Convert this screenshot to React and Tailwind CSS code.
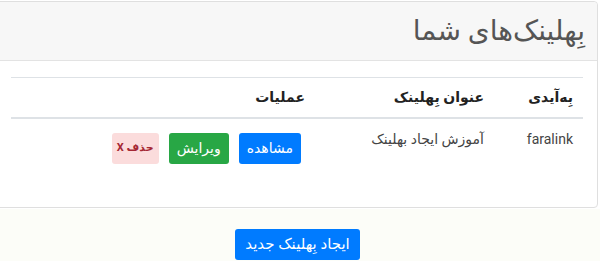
import React from 'react';

const FONT = { fontFamily: "Roboto, 'DejaVu Sans', sans-serif" };

const links = [
  { id: 'faralink', title: 'آموزش ایجاد بهلینک' },
];

export default function App() {
  return (
    <div dir="rtl" className="w-[600px] h-[261px] overflow-hidden bg-white text-[#212529]" style={FONT}>
      {/* Card */}
      <div className="mt-[1px] -ml-[4px] mr-[2px] border border-[#dfdfdf] rounded-[4px] bg-white">
        <div className="h-[59px] pr-[12px] pl-[20px] bg-[#f7f7f7] border-b border-[#e3e3e3] rounded-t-[4px] flex items-center">
          <h3 className="text-[28px] leading-none text-[#555]">بِهلینک‌های شما</h3>
        </div>

        <div className="pt-[16px] px-[14px] pb-[17px]">
          <table className="w-full mb-[16px] border-collapse text-[14px]">
            <thead>
              <tr className="border-t border-[#dee2e6] border-b-2">
                <th className="w-[89px] h-[40px] px-[10px] text-right font-bold align-middle text-[#222]">بِه‌آیدی</th>
                <th className="w-[179px] px-[10px] text-right font-bold align-middle text-[#222]">عنوان بِهلینک</th>
                <th className="px-[10px] text-right font-bold align-middle text-[#222]">عملیات</th>
              </tr>
            </thead>
            <tbody>
              {links.map((l) => (
                <tr key={l.id} className="align-top">
                  <td className="px-[10px] pt-[10px] pb-[12px] text-[#444]">{l.id}</td>
                  <td className="px-[10px] pt-[10px] pb-[12px] text-[#444]">{l.title}</td>
                  <td className="pr-[14px] pl-[10px] pt-[14px] pb-[10px]">
                    <div className="flex items-center gap-[10px]">
                      <button className="h-[31px] px-[8px] rounded-[3px] bg-[#007bff] text-white text-[14px]">مشاهده</button>
                      <button className="h-[31px] px-[8px] rounded-[3px] bg-[#28a745] text-white text-[14px]">ویرایش</button>
                      <button className="h-[31px] px-[5px] rounded-[3px] bg-[#fbdcdc] text-[#a52834] text-[11px] font-bold">حذف X</button>
                    </div>
                  </td>
                </tr>
              ))}
            </tbody>
          </table>
        </div>
      </div>

      {/* Footer */}
      <div className="mt-[1px] h-[60px] bg-[#fcfdf8] flex justify-center pt-[20px] pr-[5px]">
        <button className="h-[31px] px-[10px] rounded-[3px] bg-[#007bff] text-white text-[15px]">ایجاد بِهلینک جدید</button>
      </div>
    </div>
  );
}
